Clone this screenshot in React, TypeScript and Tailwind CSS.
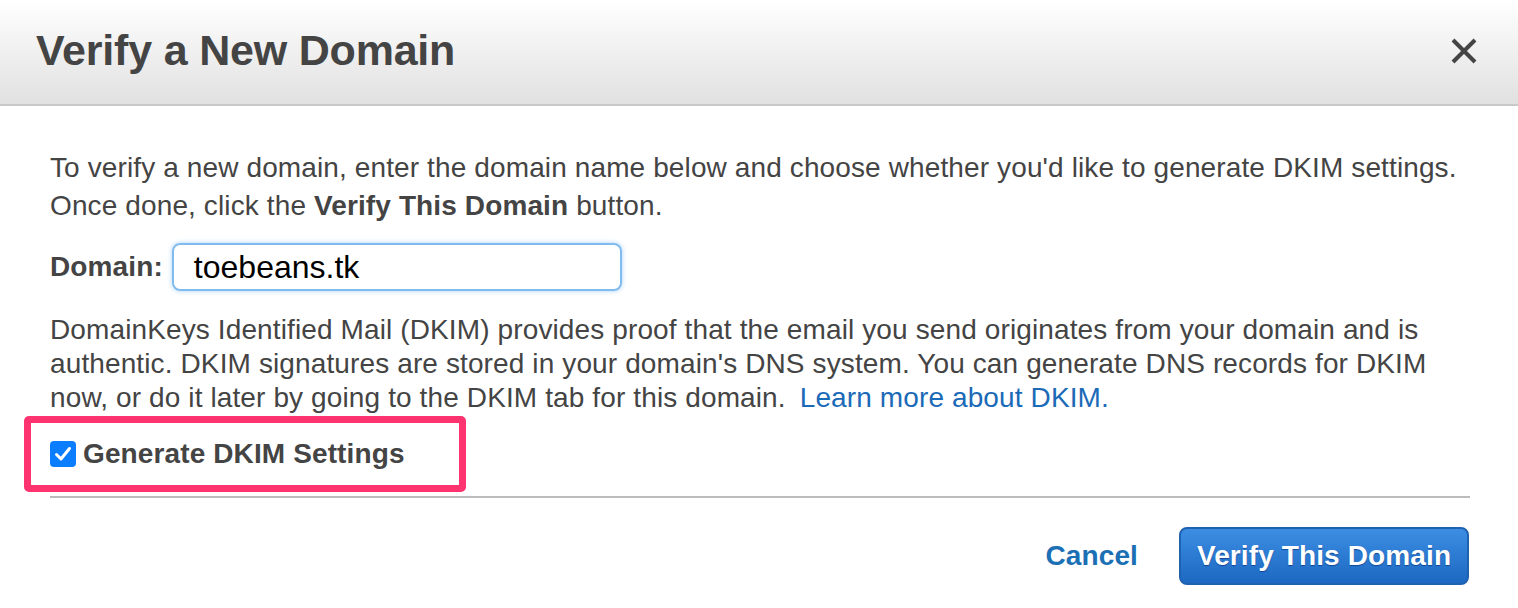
import React from "react";

export default function App() {
  return (
    <div className="w-[1518px] h-[608px] bg-white overflow-hidden text-[#444] font-['Liberation_Sans',Arial,sans-serif]">
      {/* Header */}
      <div className="h-[106px] border-b-2 border-[#c9c9c9] bg-gradient-to-b from-[#ffffff] to-[#e1e1e1] flex items-center justify-between pl-[36px] pr-[40px]">
        <h1 className="text-[43px] font-bold leading-none text-[#444] tracking-[-0.2px] pb-[4px]">Verify a New Domain</h1>
        <svg width="28" height="28" viewBox="0 0 28 28" className="mb-[2px]">
          <path d="M3 3 L25 25 M25 3 L3 25" stroke="#444" strokeWidth="4" strokeLinecap="butt" />
        </svg>
      </div>

      {/* Body */}
      <div className="pl-[50px] pr-[48px] pt-[43px] text-[28px] tracking-[0.12px]">
        <p className="leading-[38px] whitespace-nowrap">
          To verify a new domain, enter the domain name below and choose whether you'd like to generate DKIM settings.
          <br />
          Once done, click the <b>Verify This Domain</b> button.
        </p>

        <div className="flex items-center gap-[9px] mt-[18px]">
          <span className="font-bold">Domain:</span>
          <div className="w-[450px] h-[48px] rounded-[8px] border-2 border-[#80bbf0] shadow-[0_0_5px_rgba(110,175,240,0.55)] flex items-center pl-[20px] text-[32px] tracking-normal text-black">
            toebeans.tk
          </div>
        </div>

        <p className="leading-[34px] mt-[22px] whitespace-nowrap">
          DomainKeys Identified Mail (DKIM) provides proof that the email you send originates from your domain and is
          <br />
          authentic. DKIM signatures are stored in your domain's DNS system. You can generate DNS records for DKIM
          <br />
          now, or do it later by going to the DKIM tab for this domain.
          <span className="text-[#1b6ab8] ml-[14px]">Learn more about DKIM.</span>
        </p>

        <div className="-ml-[26px] mt-[1px] w-fit border-[7px] border-[#ff3370] rounded-[5px] h-[76px] flex items-center pl-[19px] pr-[54px]">
          <div className="w-[26px] h-[26px] rounded-[4px] bg-[#0b7dff] flex items-center justify-center">
            <svg width="20" height="20" viewBox="0 0 20 20">
              <path d="M3.5 10.5 L8 15 L16.5 4.5" stroke="white" strokeWidth="3" fill="none" strokeLinecap="round" strokeLinejoin="round" />
            </svg>
          </div>
          <span className="ml-[7px] font-bold">Generate DKIM Settings</span>
        </div>

        <div className="mt-[4px] h-[2px] bg-[#bcbcbc]" />

        <div className="flex items-center justify-end mt-[29px] pr-[1px]">
          <span className="font-bold text-[#1b6fb5] mr-[41px]">Cancel</span>
          <div className="h-[58px] w-[290px] rounded-[8px] border-2 border-[#1f62b0] bg-gradient-to-b from-[#3c8ee3] to-[#1c68c2] flex items-center justify-center text-white font-bold [text-shadow:0_1px_1px_rgba(0,40,110,0.6)]">
            Verify This Domain
          </div>
        </div>
      </div>
    </div>
  );
}
